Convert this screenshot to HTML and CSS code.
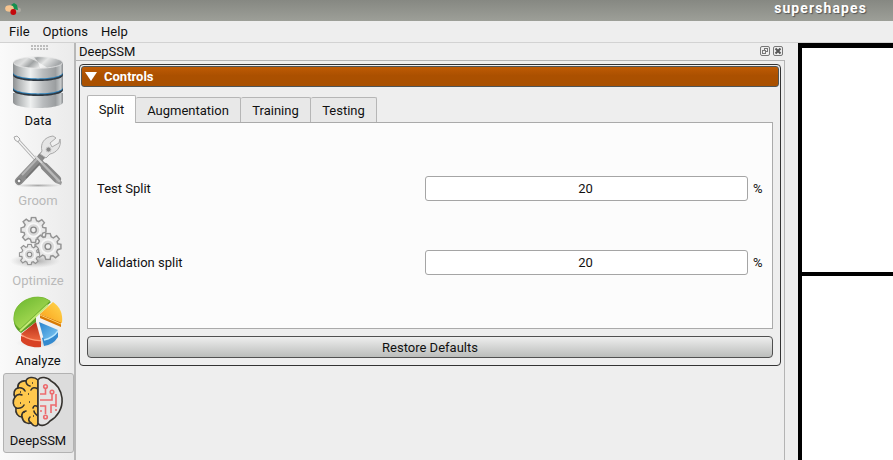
FILE: index.html
```html
<!DOCTYPE html>
<html lang="en">
<head>
<meta charset="utf-8">
<title>supershapes</title>
<link rel="stylesheet" href="styles.css">
</head>
<body>
<svg class="defs" width="0" height="0">
  <defs>
    <linearGradient id="metal"><stop offset="0" stop-color="#8c8f91"/><stop offset=".12" stop-color="#b4b7b8"/><stop offset=".35" stop-color="#eef0f0"/><stop offset=".6" stop-color="#b9bcbe"/><stop offset=".85" stop-color="#9b9ea0"/><stop offset=".95" stop-color="#c5c8c9"/><stop offset="1" stop-color="#8a8d90"/></linearGradient>
    <linearGradient id="lid" x1="0" y1="0" x2="1" y2=".25"><stop offset="0" stop-color="#b5b7b8"/><stop offset=".3" stop-color="#dedfdf"/><stop offset=".48" stop-color="#a0a3a4"/><stop offset=".7" stop-color="#e5e6e6"/><stop offset="1" stop-color="#a5a8aa"/></linearGradient>
    <linearGradient id="green" x1="0" y1="0" x2=".7" y2="1"><stop offset="0" stop-color="#68b52d"/><stop offset="1" stop-color="#b5e25c"/></linearGradient>
    <linearGradient id="yellow" x1="1" y1="0" x2="0" y2="1"><stop offset="0" stop-color="#ffd84f"/><stop offset="1" stop-color="#fa9e18"/></linearGradient>
    <linearGradient id="red" x1="0" y1="0" x2="0" y2="1"><stop offset="0" stop-color="#b52b16"/><stop offset="1" stop-color="#ec653c"/></linearGradient>
    <linearGradient id="blue" x1="0" y1="0" x2="1" y2="1"><stop offset="0" stop-color="#2682ce"/><stop offset="1" stop-color="#84ccf5"/></linearGradient>
    <radialGradient id="shade"><stop offset="0" stop-color="#888" stop-opacity=".7"/><stop offset="1" stop-color="#aaa" stop-opacity="0"/></radialGradient>
    <symbol id="gear" viewBox="-13 -13 26 26">
      <path d="M-2-12H2L3-9 5-8 8-10 10.500-7 8.500-4.500 9-2.500 12-2V2L9 3 8 5 10 8 7 10.500 4.500 8.500 2.500 9 2 12H-2L-3 9-5 8-8 10-10.500 7-8.500 4.500-9 2.500-12 2V-2L-9-3-8-5-10-8-7-10.500-4.500-8.500-2.500-9Z" fill="#e9e9e9" stroke="#949494" stroke-width="1.400"/>
      <circle r="6.400" fill="#d9d9d9" stroke="#f7f7f7" stroke-width="1.600"/>
      <circle r="2.700" fill="#eee" stroke="#8b8b8b" stroke-width="1.300"/>
    </symbol>
  </defs>
</svg>
<header class="titlebar">
  <svg class="app-icon" viewBox="4 2 18 14" width="18" height="14">
    <ellipse cx="18" cy="10" rx="3" ry="2.500" fill="#aaa89f"/>
    <path d="M11 5L14 3 17 5 18 10 13 9Z" fill="#149050"/>
    <ellipse cx="9.500" cy="8.500" rx="4.300" ry="3.200" fill="#f6c48f"/>
    <circle cx="13.300" cy="12" r="2.900" fill="#c5080c"/>
  </svg>
  <h1>supershapes</h1>
</header>
<nav class="menubar"><span>File</span><span>Options</span><span>Help</span></nav>
<div class="workspace">
  <aside class="toolbar">
    <div class="grip"></div>
    <div class="tool">
      <svg viewBox="4 54 69 59" width="69" height="59">
        <path d="M13 93V102C13 110 63 110 63 102V93Z" fill="url(#metal)"/>
        <path d="M13 78V90C13 98 63 98 63 90V78Z" fill="#303840"/>
        <path d="M13 77V88C13 96.500 63 96.500 63 88V77Z" fill="#2e80b8"/>
        <path d="M13 76V87C13 95.500 63 95.500 63 87V76Z" fill="url(#metal)"/>
        <path d="M13 63V75C13 83 63 83 63 75V63Z" fill="#303840"/>
        <path d="M13 62V73C13 81.500 63 81.500 63 73V62Z" fill="#2e80b8"/>
        <path d="M13 62V72C13 80.500 63 80.500 63 72V62Z" fill="url(#metal)"/>
        <ellipse cx="38" cy="62.500" rx="24.500" ry="5.800" fill="url(#lid)" stroke="#e8e8e8" stroke-width=".8"/>
        <path d="M38 62L28 57.500 34 57ZM38 62L47 67.500 40 68Z" fill="#fff" opacity=".6"/>
      </svg>
      <span>Data</span>
    </div>
    <div class="tool disabled">
      <svg viewBox="4 134 69 59" width="69" height="59">
        <ellipse cx="38" cy="185.500" rx="24" ry="2" fill="url(#shade)"/>
        <path d="M17 139L37 161" stroke="#aaa" stroke-width="3.200"/>
        <path d="M17 139L37 161" stroke="#f4f4f4" stroke-width="1.500"/>
        <path d="M14 137L17 136 20 139 18 142 15 140Z" fill="#f5f5f5" stroke="#aaa"/>
        <path d="M38 160L48 170" stroke="#888" stroke-width="6"/>
        <path d="M45 167L57 179" stroke="#888" stroke-width="8" stroke-linecap="round"/>
        <path d="M55 175L62 182 61 185 56 183Z" fill="#999"/>
        <path d="M39 160L59 181" stroke="#b8b8b8" stroke-width="2.500" stroke-linecap="round"/>
        <path d="M40 158L46 152" stroke="#858585" stroke-width="7"/>
        <path d="M42 151C40 144 44 137 53 136L56 138 50 143 52 147 59 143 60 139C62 147 56 153 50 154L46 158 40 154Z" fill="#e5e5e5" stroke="#aaa"/>
        <circle cx="48.500" cy="149.500" r="2.500" fill="#888" stroke="#c9c9c9"/>
        <path d="M19 181L39 160" stroke="#8c8c8c" stroke-width="8" stroke-linecap="round"/>
        <path d="M22 175L38 158" stroke="#b3b3b3" stroke-width="2"/>
        <path d="M26 178L40 163" stroke="#747474" stroke-width="1.500"/>
        <circle cx="19" cy="181" r="2" fill="#f7f7f7" stroke="#666"/>
        <path d="M35 156L42 163" stroke="#d5d5d5" stroke-width="2"/>
      </svg>
      <span>Groom</span>
    </div>
    <div class="tool disabled">
      <svg viewBox="4 214 69 59" width="69" height="59">
        <ellipse cx="35" cy="261" rx="25" ry="7" fill="url(#shade)"/>
        <use href="#gear" x="20" y="216.500" width="27" height="27"/>
        <use href="#gear" x="34" y="232.500" width="28" height="28"/>
        <use href="#gear" x="18.500" y="243.500" width="22" height="22"/>
      </svg>
      <span>Optimize</span>
    </div>
    <div class="tool">
      <svg viewBox="4 294 69 59" width="69" height="59">
        <ellipse cx="39" cy="343" rx="23" ry="5" fill="url(#shade)" opacity=".4"/>
        <path d="M14 317C15 305 27 297 38 297Q45 297 51 302L36 316V322L21 333C16 329 13 325 14 317Z" fill="#5b9e25"/>
        <path d="M14 316C15 304 27 297 38 297Q45 297 50 301L20 329C16 326 13 322 14 316Z" fill="url(#green)" stroke="#78b933" stroke-width=".7"/>
        <path d="M20 331L48 305" stroke="#c4ea77" stroke-width="2"/>
        <path d="M40 314L61 322V327L40 318Z" fill="#d87905"/>
        <path d="M40 314L53 302C60 307 63 313 62 323Z" fill="url(#yellow)"/>
        <path d="M40 315L61 324" stroke="#ffcf69" stroke-width="1"/>
        <path d="M21 336L41 341V347C33 348 25 346 21 341Z" fill="#d84225"/>
        <path d="M36 322L41 340C33 341 25 339 21 334Z" fill="url(#red)"/>
        <path d="M21.500 335Q31 341 41 340.500" fill="none" stroke="#ff9a75" stroke-width="1.300"/>
        <path d="M42 338L58 331V337Q53 345 44 346Z" fill="#348acf"/>
        <path d="M39 322L58 330Q53 338 44 340Z" fill="url(#blue)"/>
        <path d="M44 340Q53 338 58 331" fill="none" stroke="#b9e7ff" stroke-width="1.300"/>
      </svg>
      <span>Analyze</span>
    </div>
    <div class="tool active">
      <svg viewBox="4 374 69 59" width="69" height="59">
        <g stroke="#35322e" stroke-width="1.600" stroke-linecap="round" stroke-linejoin="round">
          <path d="M38 380C34 376 27 377 26 381C21 380 17 384 18 388C14 389 13 394 15 397C12 401 13 406 16 408C15 413 18 417 22 417C23 423 28 424 31 423C34 427 38 427 38 423Z" fill="#ffc84d"/>
          <path d="M26 381Q26 385 30 386M18 388Q23 387 25 391M15 397Q18 393 22 395M16 408Q22 409 24 405M22 417Q21 412 26 411M31 423Q27 420 30 417M38 389Q33 386 31 390M38 407Q34 404 33 408M38 416Q34 413 34 411" fill="none"/>
          <path d="M38 380C40 376 48 377 51 381C57 384 61 391 62 398C63 409 57 417 50 421C45 427 39 426 38 423Z" fill="#e4e4e4"/>
        </g>
        <path d="M20 392h1M28 394h1M29 402h1M20 403h1M24 412h1M33 416h1M32 383h1" stroke="#35322e" stroke-width="1.500"/>
        <g fill="none" stroke="#ed6b6e" stroke-width="1.600">
          <circle cx="45.500" cy="386.500" r="1.800"/><circle cx="52" cy="392" r="1.800"/><circle cx="45.500" cy="417" r="1.800"/>
          <path d="M45.500 389V394H40M52 394V400H40M56 394V407M56 409V411M40 406H45.500V414M51 413V405H56M40 411H42"/>
        </g>
      </svg>
      <span>DeepSSM</span>
    </div>
  </aside>
  <main class="dock">
    <div class="dock-title"><span>DeepSSM</span>
      <svg viewBox="0 0 23 10" width="23" height="10" fill="none" stroke="#777">
        <rect x=".5" y=".5" width="9" height="9" rx="1.500"/><rect x="4.500" y="2.500" width="3" height="3"/><rect x="2.500" y="4.500" width="3" height="3" fill="#eee"/>
        <rect x="13.500" y=".5" width="9" height="9" rx="1.500"/><path d="M15.500 2.500L20.500 7.500M20.500 2.500L15.500 7.500" stroke="#555" stroke-width="2"/>
      </svg>
    </div>
    <div class="dock-body">
      <section class="group">
        <div class="group-head"><i class="arrow"></i><b>Controls</b></div>
        <div class="tabs"><span class="tab selected">Split</span><span class="tab aug">Augmentation</span><span class="tab train">Training</span><span class="tab test">Testing</span></div>
        <div class="pane">
          <div class="row"><label>Test Split</label><div class="field">20</div><span>%</span></div>
          <div class="row"><label>Validation split</label><div class="field">20</div><span>%</span></div>
        </div>
        <div class="button">Restore Defaults</div>
      </section>
    </div>
  </main>
  <div class="views"><div></div><div></div></div>
</div>
</body>
</html>
```
FILE: styles.css
```css
* { box-sizing: border-box; }
body { margin: 0; width: 893px; height: 460px; overflow: hidden; display: flex; flex-direction: column; background: #eee; color: #111; font: 13px/16px Roboto, sans-serif; }
.defs { position: absolute; }
.titlebar { height: 21px; flex: none; display: flex; justify-content: space-between; padding: 2px 26px 0 4px; background: linear-gradient(#868882, #9d9f98); }
.titlebar h1 { margin: -2px 0 0; font-size: 14px; line-height: 16px; font-weight: 700; letter-spacing: 1.1px; color: #fff; text-shadow: 1px 1px 1px #555; }
.menubar { height: 22px; flex: none; display: flex; gap: 13px; padding: 3px 9px 0; letter-spacing: .05px; border-bottom: 1px solid #d2d2d2; }
.workspace { flex: 1; display: flex; min-height: 0; }
.toolbar { width: 76px; padding: 2px 0 0 3px; border-right: 2px solid #b8b8b8; background: linear-gradient(90deg, #fafafa, #ebebeb); }
.grip { height: 5px; width: 17px; margin: 0 0 3px 28px; background: radial-gradient(circle at 1px 1px, #bbb .7px, transparent 1px) 0 0 / 3px 3px; }
.tool { width: 71px; height: 80px; border: 1px solid transparent; border-radius: 3px; display: flex; flex-direction: column; align-items: center; }
.tool svg { flex: none; display: block; }
.tool span { margin-right: 1px; }
.tool.disabled { color: #b9b9b9; }
.tool.active { background: #dcdcdc; border-color: #b2b2b2; }
.dock { width: 709px; display: flex; flex-direction: column; }
.dock-title { height: 17px; display: flex; justify-content: space-between; padding: 0 2px 0 3px; }
.dock-title span { margin-top: 1px; }
.dock-title svg { margin-top: 3px; }
.dock-body { flex: 1; border-top: 1px solid #b4b4b4; border-right: 1px solid #b4b4b4; padding: 3px 3px 0; }
.group { height: 302px; width: 702px; border: 1px solid #333; border-radius: 4px; padding: 1px 1px 7px; display: flex; flex-direction: column; }
.group-head { height: 21px; flex: none; border: 1px solid #4f5455; border-radius: 3px; background: linear-gradient(#be5b04, #ab5000 45%, #a95000); color: #fff; display: flex; align-items: center; padding-left: 3px; gap: 7px; }
.arrow { border: 6.5px solid transparent; border-top: 9px solid #fff; border-bottom: 0; }
.tabs { display: flex; align-items: flex-end; height: 28px; margin: 8px 6px -1px; flex: none; position: relative; }
.tab { height: 25px; margin-bottom: 1px; padding-top: 5px; text-align: center; border: 1px solid #b6b6b6; border-left: 0; border-bottom: 0; border-radius: 2px 2px 0 0; background: #e8e8e8; }
.selected { width: 49px; height: 28px; margin: 0; padding-top: 6px; border-left: 1px solid #aaa; background: linear-gradient(#fff, #fcfcfc); }
.aug { width: 105px; }
.train { width: 70px; }
.test { width: 66px; }
.pane { height: 207px; flex: none; margin: 0 6px; border: 1px solid #aaa; background: #fcfcfc; padding: 53px 9px 0; }
.row { height: 25px; margin-bottom: 49px; display: grid; grid-template-columns: 328px 323px 10px; align-items: center; }
.row > span { margin-left: 5px; letter-spacing: -1px; }
.field { height: 25px; border: 1px solid #a5a5a5; border-radius: 3px; background: #fff; text-align: center; line-height: 23px; padding-right: 2px; }
.button { height: 22px; flex: none; margin: 7px 6px 0; border: 1px solid #505050; border-radius: 4px; background: linear-gradient(#eee, #bbbdbb); text-align: center; line-height: 21px; }
.views { width: 95px; margin-left: 13px; background: #000; padding: 5px 0 0 4px; display: grid; grid-template-rows: 224px 1fr; gap: 4px; }
.views div { background: #fff; }
```
